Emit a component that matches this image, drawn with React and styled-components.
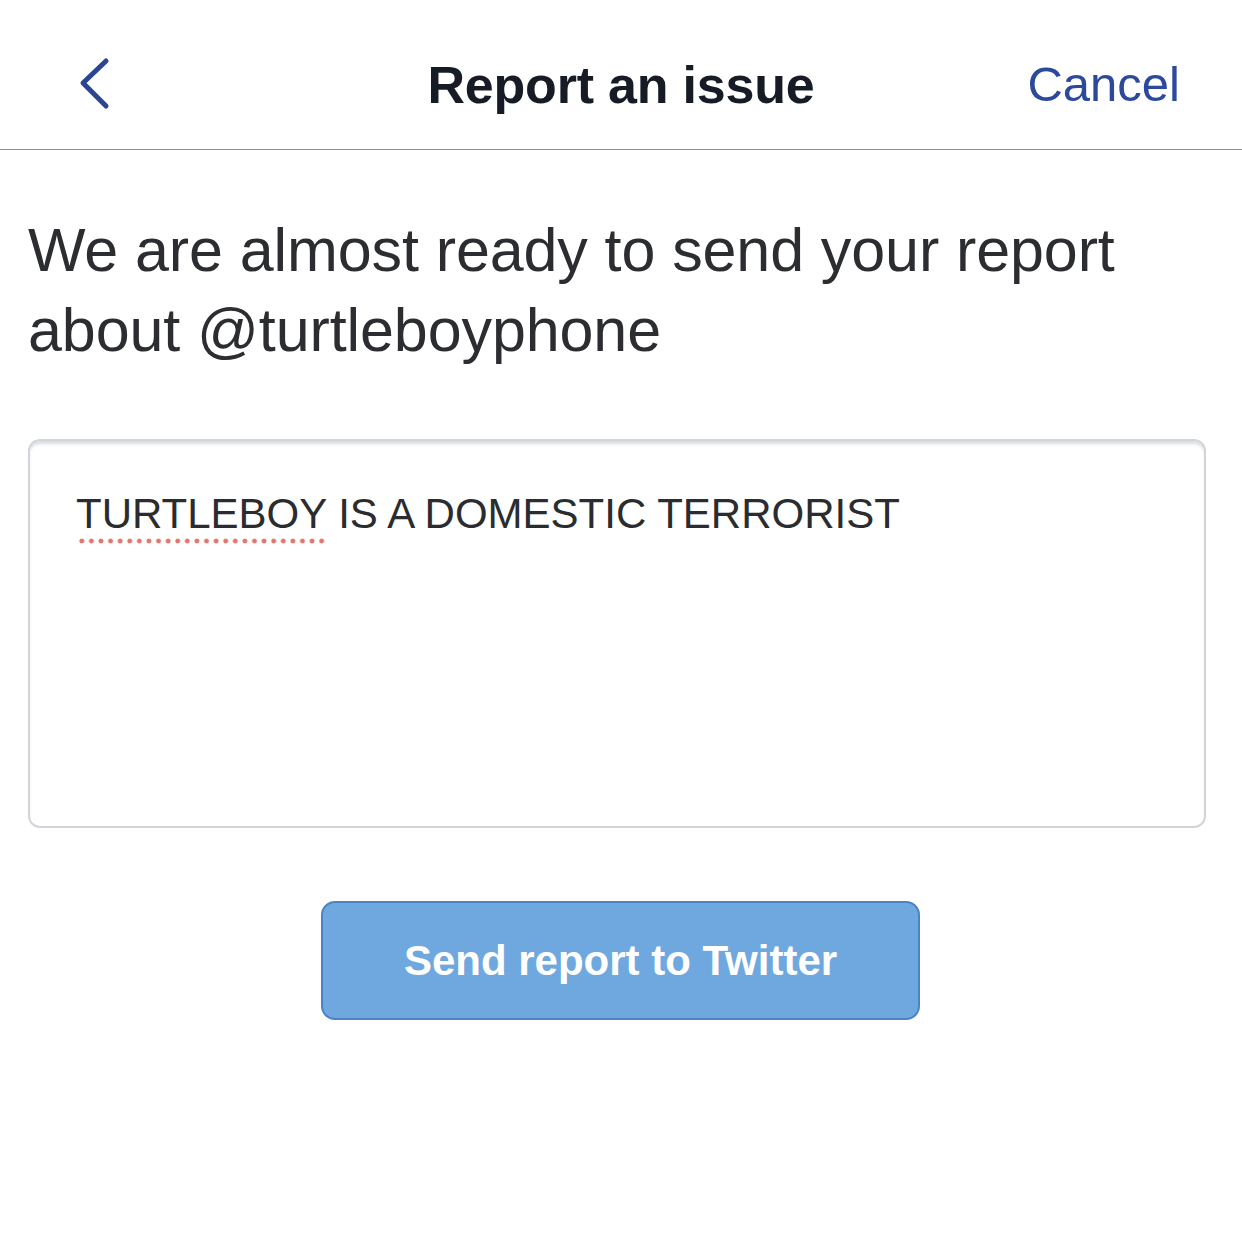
import React from 'react';
import styled, { createGlobalStyle } from 'styled-components';

const GlobalStyle = createGlobalStyle`
  html, body {
    margin: 0;
    padding: 0;
    background: #ffffff;
  }
  body {
    font-family: "Liberation Sans", Arial, sans-serif;
  }
`;

const Page = styled.div`
  width: 1242px;
  min-height: 1246px;
  background: #ffffff;
`;

const Header = styled.header`
  box-sizing: border-box;
  height: 150px;
  display: grid;
  grid-template-columns: 1fr auto 1fr;
  align-items: center;
  border-bottom: 1px solid #8f8f8f;
  padding: 20px 62px 0 62px;
`;

const BackButton = styled.button`
  justify-self: start;
  background: none;
  border: none;
  padding: 0;
  margin-left: 17px;
  width: 34px;
  height: 56px;
  display: flex;
  align-items: center;
  cursor: pointer;
  margin-top: -2px;
`;

const Title = styled.h1`
  margin: 0;
  font-size: 52px;
  font-weight: 700;
  color: #161b26;
  letter-spacing: -0.2px;
`;

const CancelLink = styled.button`
  justify-self: end;
  background: none;
  border: none;
  padding: 0;
  font-family: inherit;
  font-size: 49px;
  color: #2c4a9c;
  cursor: pointer;
  margin-top: -2px;
`;

const Content = styled.main`
  padding: 61px 28px 0 28px;
  display: flex;
  flex-direction: column;
`;

const Lead = styled.p`
  margin: 0;
  margin-top: -1px;
  font-size: 61px;
  line-height: 80px;
  font-weight: 400;
  color: #2b2d30;
  letter-spacing: -0.1px;
`;

const MessageBox = styled.div`
  margin-top: 69px;
  width: 1178px;
  height: 389px;
  box-sizing: border-box;
  border: 2px solid #d1d5da;
  border-radius: 12px;
  box-shadow: inset 0 4px 3px -1px rgba(150, 158, 168, 0.35);
  padding: 48px 46px;
  font-size: 42px;
  line-height: 50px;
  color: #2a2c2f;
`;

const Misspelled = styled.span`
  padding-bottom: 7px;
  background-image: radial-gradient(circle, #e8766b 2.2px, transparent 2.7px);
  background-size: 9.6px 6px;
  background-repeat: repeat-x;
  background-position: 1px 100%;
`;

const ButtonRow = styled.div`
  display: flex;
  justify-content: center;
  margin-top: 73px;
`;

const SendButton = styled.button`
  width: 599px;
  height: 119px;
  margin-left: -1px;
  background: #6fa8df;
  border: 2px solid #4c84c3;
  border-radius: 14px;
  color: #ffffff;
  font-family: inherit;
  font-size: 42px;
  font-weight: 700;
  cursor: pointer;
`;

const ChevronLeft = () => (
  <svg width="34" height="56" viewBox="0 0 34 56" fill="none">
    <polyline
      points="27,5 4,27 27,50"
      stroke="#2a4591"
      strokeWidth="5"
      strokeLinecap="round"
      strokeLinejoin="round"
    />
  </svg>
);

export default function App() {
  return (
    <Page>
      <GlobalStyle />
      <Header>
        <BackButton aria-label="Back">
          <ChevronLeft />
        </BackButton>
        <Title>Report an issue</Title>
        <CancelLink>Cancel</CancelLink>
      </Header>
      <Content>
        <Lead>
          We are almost ready to send your report
          <br />
          about @turtleboyphone
        </Lead>
        <MessageBox>
          <Misspelled>TURTLEBOY</Misspelled> IS A DOMESTIC TERRORIST
        </MessageBox>
        <ButtonRow>
          <SendButton>Send report to Twitter</SendButton>
        </ButtonRow>
      </Content>
    </Page>
  );
}
